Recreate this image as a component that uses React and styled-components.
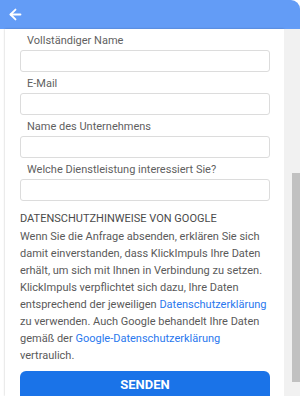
import React from "react";
import styled, { createGlobalStyle } from "styled-components";
import { FiArrowLeft } from "react-icons/fi";

const Global = createGlobalStyle`
	html, body {
		margin: 0;
		padding: 0;
		background: #ffffff;
		font-family: Roboto, "Liberation Sans", Arial, sans-serif;
	}
	* {
		box-sizing: border-box;
	}
`;

const S = {
	Widget: styled.div`
		width: 300px;
		height: 396px;
		display: flex;
		flex-direction: column;
		overflow: hidden;
		background: #ffffff;
	`,
	Header: styled.div`
		height: 29px;
		flex: none;
		display: flex;
		align-items: center;
		padding-left: 7px;
		background: #639cf6;
		border-top-right-radius: 9px;
		color: #ffffff;
		& > svg {
			width: 17px;
			height: 17px;
			stroke-width: 2.6;
		}
	`,
	Body: styled.div`
		flex: 1;
		display: flex;
		min-height: 0;
	`,
	Panel: styled.div`
		flex: 1;
		margin-left: 5px;
		padding: 5px 14px 0 15px;
		background: #ffffff;
		box-shadow: 0 0 2px rgba(0, 0, 0, 0.25);
		display: flex;
		flex-direction: column;
		overflow: hidden;
	`,
	Gutter: styled.div`
		width: 16px;
		flex: none;
		background: #f1f1f1;
		display: flex;
		flex-direction: column;
		align-items: flex-end;
		padding-top: 144px;
	`,
	Thumb: styled.div`
		width: 8px;
		height: 209px;
		background: #c1c1c1;
	`,
	Field: styled.div`
		display: flex;
		flex-direction: column;
		margin-bottom: 5px;
	`,
	Label: styled.label`
		font-size: 11px;
		line-height: 13px;
		color: #5f5f5f;
		padding-left: 7px;
		margin-bottom: 3px;
	`,
	Input: styled.input`
		height: 22px;
		width: 250px;
		border: 1px solid #dcdcdc;
		border-radius: 3px;
		background: #ffffff;
		outline: none;
	`,
	Notice: styled.div`
		margin-top: 4px;
		font-size: 11px;
		line-height: 17px;
		color: #5a5a5a;
	`,
	Title: styled.div`
		font-size: 11px;
		line-height: 18px;
		color: #4a4a4a;
	`,
	Link: styled.a`
		color: #2a78ee;
		text-decoration: none;
	`,
	Button: styled.button`
		margin-top: 7px;
		width: 250px;
		height: 30px;
		flex: none;
		border: none;
		border-radius: 6px;
		background: #1a73e8;
		color: #ffffff;
		font-family: Roboto, "Liberation Sans", Arial, sans-serif;
		font-size: 13px;
		font-weight: 700;
		line-height: 15px;
		display: flex;
		justify-content: center;
		align-items: flex-start;
		padding: 6px 0 0;
	`,
};

const fields = [
	"Vollständiger Name",
	"E-Mail",
	"Name des Unternehmens",
	"Welche Dienstleistung interessiert Sie?",
];

function App() {
	return (
		<S.Widget>
			<Global />
			<S.Header>
				<FiArrowLeft />
			</S.Header>
			<S.Body>
				<S.Panel>
					{fields.map((label) => (
						<S.Field key={label}>
							<S.Label>{label}</S.Label>
							<S.Input />
						</S.Field>
					))}
					<S.Notice>
						<S.Title>DATENSCHUTZHINWEISE VON GOOGLE</S.Title>
						Wenn Sie die Anfrage absenden, erklären Sie sich damit
						einverstanden, dass KlickImpuls Ihre Daten erhält, um sich mit
						Ihnen in Verbindung zu setzen. KlickImpuls verpflichtet sich
						dazu, Ihre Daten entsprechend der jeweiligen{" "}
						<S.Link href="#">Datenschutzerklärung</S.Link> zu verwenden.
						Auch Google behandelt Ihre Daten gemäß der{" "}
						<S.Link href="#">Google-Datenschutzerklärung</S.Link> vertraulich.
					</S.Notice>
					<S.Button>SENDEN</S.Button>
				</S.Panel>
				<S.Gutter>
					<S.Thumb />
				</S.Gutter>
			</S.Body>
		</S.Widget>
	);
}

export default App;
